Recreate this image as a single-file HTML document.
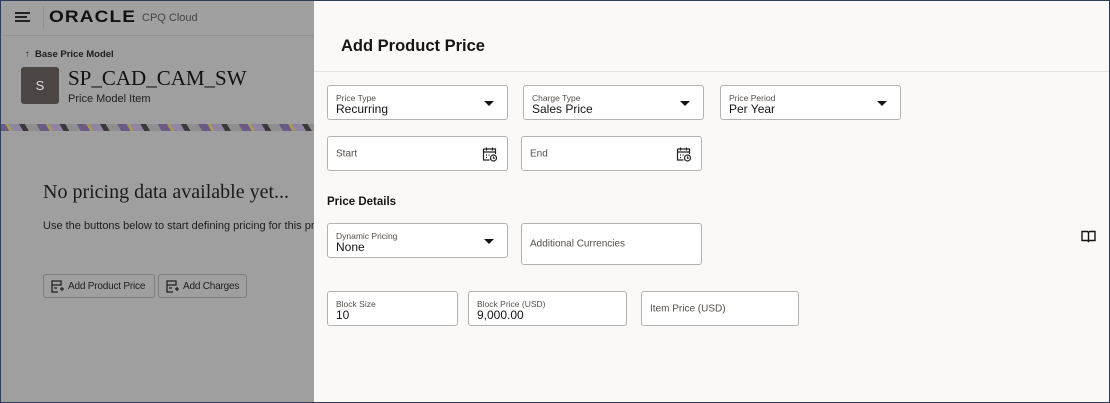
<!DOCTYPE html>
<html><head><style>
*{margin:0;padding:0;box-sizing:border-box}
body{width:1110px;height:403px;overflow:hidden;font-family:"Liberation Sans",sans-serif;background:#9f9f9f;position:relative}
.frame{position:absolute;inset:0;border:1px solid #2d3d5a;z-index:10;pointer-events:none}
.left{position:absolute;left:0;top:0;width:314px;height:403px;background:#9f9f9f;color:#1e1e1e}
.hdr{position:absolute;left:0;top:0;width:314px;height:36px;border-bottom:1px solid #939393;background:#a0a0a0}
.panel{position:absolute;left:314px;top:0;width:796px;height:403px;background:#faf9f8}
.ph{height:72px;border-bottom:1px solid #e6e4e2}
.ph h1{position:absolute;left:27px;top:37px;font-size:16.5px;font-weight:bold;color:#161513}
.f{position:absolute;background:#fff;border:1px solid #b4b2b0;border-radius:3px}
.f .l{position:absolute;left:8px;top:7px;font-size:8.5px;color:#55504b}
.f .v{position:absolute;left:8px;top:16px;font-size:12px;color:#161513}
.f .p{position:absolute;left:8px;top:50%;transform:translateY(-50%);font-size:10px;color:#55504b}
.f .dd{position:absolute;right:13px;top:15px;width:0;height:0;border-left:5px solid transparent;border-right:5px solid transparent;border-top:5px solid #161513}
.f svg{position:absolute;right:9px;top:9px}
.btn{position:absolute;top:274px;height:24px;border:1px solid #7d7d7d;border-radius:3px;font-size:10px;color:#1e1e1e;padding:6px 0 0 24px;white-space:nowrap;letter-spacing:-0.2px}
.btn svg{position:absolute;left:7px;top:5px}
</style></head><body>
<div class="left">
 <div class="hdr">
  <div style="position:absolute;left:15px;top:12px;width:15px;height:2px;background:#222"></div>
  <div style="position:absolute;left:15px;top:16px;width:12px;height:2px;background:#222"></div>
  <div style="position:absolute;left:15px;top:20px;width:15px;height:2px;background:#222"></div>
  <div style="position:absolute;left:43px;top:6px;width:1px;height:22px;background:#909090"></div>
  <div style="position:absolute;left:49px;top:7px;font-size:17px;font-weight:bold;letter-spacing:1px;color:#111;transform:scaleX(1.12);transform-origin:left">ORACLE</div>
  <div style="position:absolute;left:142px;top:12px;font-size:11px;color:#444">CPQ Cloud</div>
 </div>
 <div style="position:absolute;left:25px;top:49px;font-size:9.5px;font-weight:600">↑ &nbsp;Base Price Model</div>
 <div style="position:absolute;left:21px;top:67px;width:38px;height:37px;background:#4b4643;border-radius:3px;color:#ddd;font-size:13px;text-align:center;line-height:37px">S</div>
 <div style="position:absolute;left:68px;top:66px;font-family:'Liberation Serif',serif;font-size:21px;color:#111">SP_CAD_CAM_SW</div>
 <div style="position:absolute;left:68px;top:93px;font-size:11px">Price Model Item</div>
 <div style="position:absolute;left:0;top:124px;width:314px;height:7px;background:repeating-linear-gradient(60deg,#6b5a85 0 8px,#a59a5a 8px 11px,#8f85a0 11px 20px,#3a3a3a 20px 25px,#8f8f8f 25px 35px)"></div>
 <div style="position:absolute;left:43px;top:181px;font-family:'Liberation Serif',serif;font-size:20px;color:#1a1a1a">No pricing data available yet...</div>
 <div style="position:absolute;left:43px;top:220px;font-size:11px;white-space:nowrap">Use the buttons below to start defining pricing for this product.</div>
 <div class="btn" style="left:43px;width:112px"><svg width="13" height="13" viewBox="0 0 13 13" fill="none" stroke="#222" stroke-width="1.3"><path d="M1 1h9v4H1zM1 5v7h6M3 8h3M9 9h4M11 7v4"/></svg>Add Product Price</div>
 <div class="btn" style="left:158px;width:89px"><svg width="13" height="13" viewBox="0 0 13 13" fill="none" stroke="#222" stroke-width="1.3"><path d="M1 1h9v4H1zM1 5v7h6M3 8h3M9 9h4M11 7v4"/></svg>Add Charges</div>
</div>
<div class="panel">
 <div class="ph"><h1>Add Product Price</h1></div>
 <div class="f" style="left:13px;top:85px;width:181px;height:35px"><div class="l">Price Type</div><div class="v">Recurring</div><div class="dd"></div></div>
 <div class="f" style="left:209px;top:85px;width:181px;height:35px"><div class="l">Charge Type</div><div class="v">Sales Price</div><div class="dd"></div></div>
 <div class="f" style="left:406px;top:85px;width:181px;height:35px"><div class="l">Price Period</div><div class="v">Per Year</div><div class="dd"></div></div>
 <div class="f" style="left:13px;top:136px;width:181px;height:35px"><div class="p">Start</div><svg width="16" height="16" viewBox="0 0 16 16" fill="none" stroke="#222" stroke-width="1.2"><path d="M1.5 3h12v5M1.5 3v11h6M1.5 6h12M4.5 1.5v3M10.5 1.5v3M4 9h1M6.5 9h1M4 11.5h1"/><circle cx="11.5" cy="12" r="3"/><path d="M11.5 10.5v1.7h1.3"/></svg></div>
 <div class="f" style="left:207px;top:136px;width:181px;height:35px"><div class="p">End</div><svg width="16" height="16" viewBox="0 0 16 16" fill="none" stroke="#222" stroke-width="1.2"><path d="M1.5 3h12v5M1.5 3v11h6M1.5 6h12M4.5 1.5v3M10.5 1.5v3M4 9h1M6.5 9h1M4 11.5h1"/><circle cx="11.5" cy="12" r="3"/><path d="M11.5 10.5v1.7h1.3"/></svg></div>
 <div style="position:absolute;left:13px;top:196px;font-size:11.5px;font-weight:bold;color:#161513">Price Details</div>
 <div class="f" style="left:13px;top:223px;width:181px;height:35px"><div class="l">Dynamic Pricing</div><div class="v">None</div><div class="dd"></div></div>
 <div class="f" style="left:207px;top:223px;width:181px;height:42px"><div class="p">Additional Currencies</div></div>
 <div class="f" style="left:13px;top:291px;width:131px;height:35px"><div class="l">Block Size</div><div class="v">10</div></div>
 <div class="f" style="left:154px;top:291px;width:159px;height:35px"><div class="l">Block Price (USD)</div><div class="v">9,000.00</div></div>
 <div class="f" style="left:327px;top:291px;width:158px;height:35px"><div class="p">Item Price (USD)</div></div>
 <svg style="position:absolute;left:767px;top:230px" width="15" height="13" viewBox="0 0 15 13" fill="none" stroke="#161513" stroke-width="1.4"><path d="M1 1.5h5.5l1 1 1-1H14v9H8.5l-1 1-1-1H1zM7.5 2.5v9"/></svg>
</div>
<div class="frame"></div>
</body></html>
